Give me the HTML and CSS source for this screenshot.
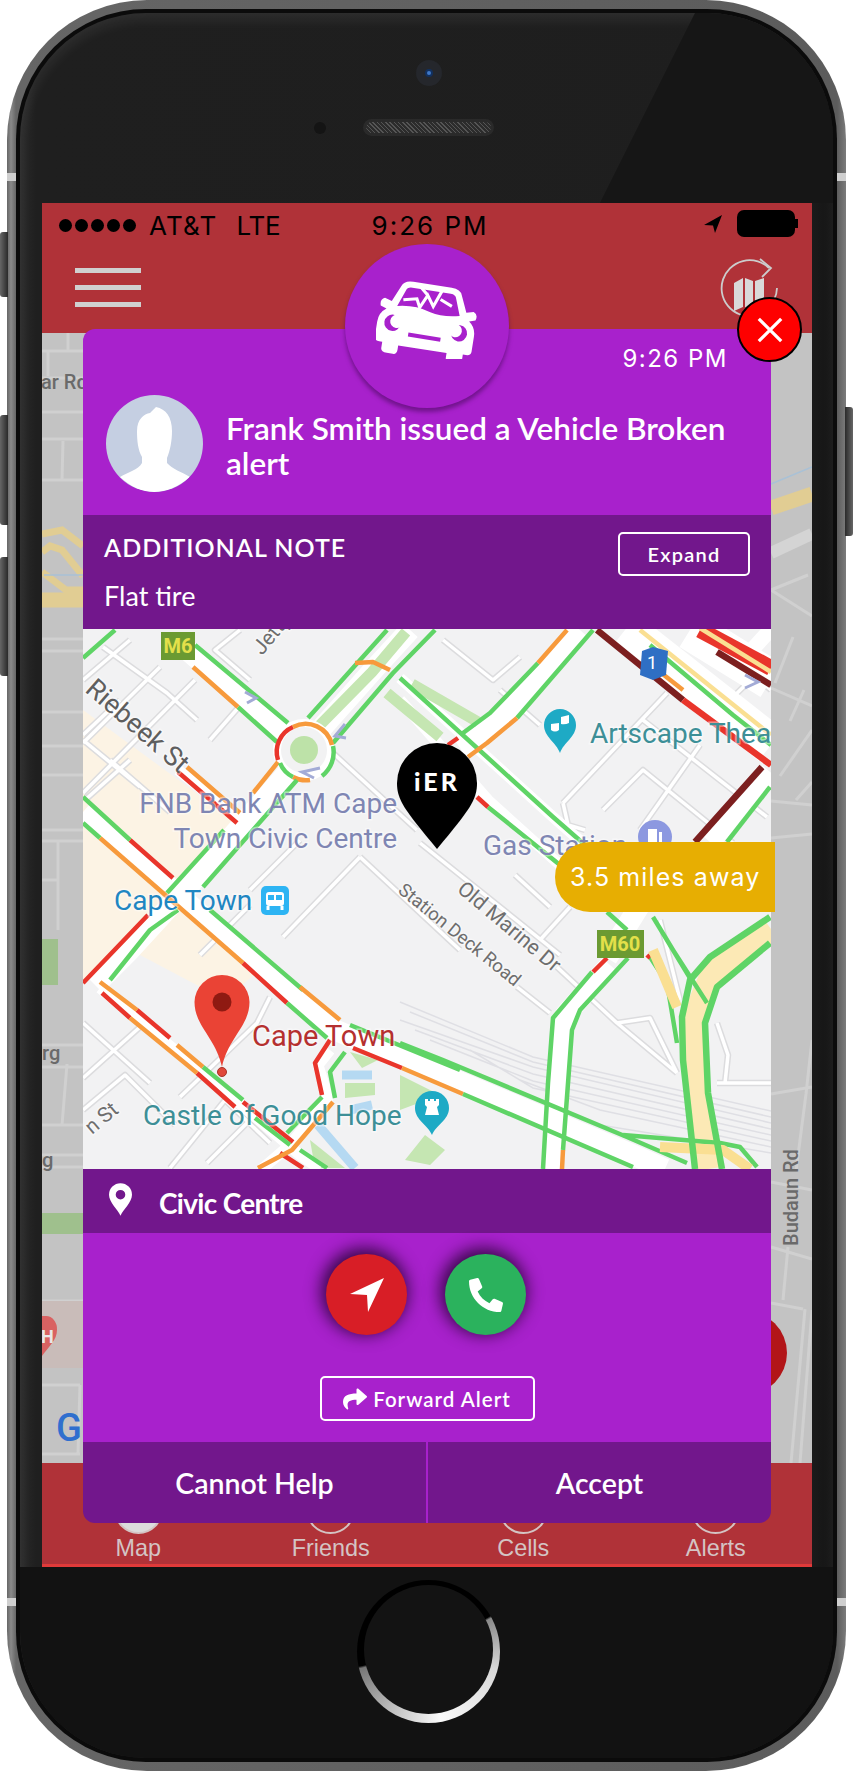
FILE: index.html
```html
<!DOCTYPE html>
<html>
<head>
  <title>iER Alert</title>
  <link rel="stylesheet" href="styles.css">
</head>
<body>
  <div class="device">
    <div class="side-btn left mute"></div>
    <div class="side-btn left vol-up"></div>
    <div class="side-btn left vol-down"></div>
    <div class="side-btn right power"></div>
    <div class="band left top"></div>
    <div class="band right top"></div>
    <div class="band left bottom"></div>
    <div class="band right bottom"></div>

    <div class="rim">
      <div class="edge">
        <div class="face">
          <div class="face-top">
            <div class="camera"><div class="lens"></div></div>
            <div class="speaker-row">
              <div class="sensor"></div>
              <div class="speaker"></div>
            </div>
          </div>

          <div class="screen">
            <div class="status">
              <div class="dots"><i></i><i></i><i></i><i></i><i></i></div>
              <span class="carrier">AT&amp;T</span>
              <span class="network">LTE</span>
              <span class="status-time">9:26 PM</span>
              <svg class="status-arrow" viewBox="0 0 18 18"><path d="M18 0L0 10l9 .5L11 18z"/></svg>
              <div class="battery"></div>
            </div>

            <div class="nav">
              <div class="burger"><i></i><i></i><i></i></div>
              <svg class="map-refresh" viewBox="0 0 60 60">
                <path class="refresh-line" d="M50 10A28 28 0 1 0 34 58M58 30a28 28 0 0 1-3 12"/>
                <path class="refresh-line" d="M41 1l11 9-9 9"/>
                <path class="refresh-fold" d="M15 25l9-5v29l-9 4zM26 20l8 3v29l-8-3zM36 23l9-3v29l-9 3z"/>
              </svg>
            </div>

            <svg class="back-map" viewBox="42 333 770 1130">
              <rect x="42" y="333" width="770" height="1130" fill="#c3c3c3"/>
              <g class="back-roads">
                <path d="M68 333V351M42 351H83M48 351V376M42 378H83M42 412H83M42 439H83M63 441L62 480M42 480H83M42 639H83M42 651H83M42 712H83M42 746H83M42 775H83M42 830H83M42 841H83M58 841V930M42 880H58"/>
                <path d="M42 1045H83M42 1067H83M67 1064L62 1125M42 1125H83M42 1155H83M42 1167H83M42 1301H83M42 1385H80M80 1385L78 1454M42 1454H80M60 1310L56 1368"/>
                <path d="M771 590L812 616M771 590L808 575M793 637L775 683M771 688L812 706M804 690L790 721M780 776L812 730M796 800L812 782M771 801L812 805M771 838L812 834"/>
                <path d="M771 1094L812 1087M806 1094L796 1171M812 1040L806 1094M771 1182L812 1190M771 1247L812 1259M783 1300L788 1247M771 1303L803 1309M805 1309L791 1463M812 1310L800 1463"/>
              </g>
              <path class="back-wide" d="M771 553L812 534"/>
              <path class="back-water" d="M771 484L812 467"/>
              <path class="back-yellow" d="M771 508L812 494"/>
              <path class="back-yellow thin" d="M42 534L62 530L83 546M42 552L50 546L62 550L83 576M42 572L66 590H83"/>
              <path class="back-yellow" d="M42 600H83"/>
              <path class="back-water" d="M44 575H83"/>
              <rect class="back-green" x="42" y="939" width="16" height="46"/>
              <rect class="back-green" x="42" y="1213" width="41" height="21"/>
              <rect class="back-pink" x="42" y="1301" width="41" height="67"/>
              <path class="back-pin" d="M42 1316h4a11 13 0 0 1 11 14c0 10-8 16-15 26z"/>
              <text class="back-pin-h" x="41" y="1343">H</text>
              <text class="back-label" x="41" y="389">ar Rd</text>
              <text class="back-label" x="42" y="1060">rg</text>
              <text class="back-label" x="42" y="1167">g</text>
              <text class="back-logo" x="56" y="1441">G</text>
              <circle cx="745" cy="1353" r="42" fill="#b21518"/>
              <text class="back-label" transform="translate(798 1246) rotate(-90)">Budaun Rd</text>
            </svg>

            <div class="tabs">
              <div class="tab"><div class="tab-icon filled"></div><span>Map</span></div>
              <div class="tab"><div class="tab-icon"></div><span>Friends</span></div>
              <div class="tab"><div class="tab-icon"></div><span>Cells</span></div>
              <div class="tab"><div class="tab-icon"></div><span>Alerts</span></div>
            </div>

            <!-- alert popup over the map screen -->
            <div class="alert">
              <div class="alert-badge">
                <svg class="car" viewBox="0 0 100 76">
                  <g transform="rotate(9 50 38)">
                    <path fill="#fff" d="M20 9Q22 3 31 3H69Q78 3 80 9L87 25L94 23Q99 25 97 31L91 33Q98 38 98 47V62Q98 66 93 66H90V72Q90 76 84 76H78Q74 76 74 71V67H26V71Q26 76 22 76H16Q10 76 10 72V66H7Q2 66 2 62V47Q2 38 9 33L3 31Q1 25 6 23L13 25Z"/>
                    <path fill="#a821cc" d="M25 13Q26 9 31 9H69Q74 9 75 13L81 29Q64 33 52 30Q36 25 19 29Z"/>
                    <path fill="none" stroke="#fff" stroke-width="3" d="M24 22L37 19L41 27L47 14L54 24L60 8M47 14L39 7M60 16L72 21"/>
                    <circle cx="17" cy="46" r="8" fill="#a821cc"/>
                    <circle cx="21" cy="44" r="6.500" fill="#fff"/>
                    <circle cx="83" cy="46" r="8" fill="#a821cc"/>
                    <circle cx="79" cy="44" r="6.500" fill="#fff"/>
                    <path stroke="#a821cc" stroke-width="4" d="M34 55H66"/>
                  </g>
                </svg>
              </div>
              <div class="alert-close">
                <svg viewBox="0 0 30 30"><path d="M3 3L27 27M27 3L3 27"/></svg>
              </div>

              <div class="alert-head">
                <div class="alert-time">9:26 PM</div>
                <div class="alert-who">
                  <div class="avatar">
                    <svg viewBox="0 0 97 97">
                      <path fill="#fff" d="M50 12C60 14 66 22 66 36C66 46 64 56 61 63V68C66 74 76 77 84 82C72 92 60 97 48 97C36 97 25 92 14 82C22 77 32 75 36 68V62C32 55 31 46 31 36C31 24 38 19 44 18Z"/>
                    </svg>
                  </div>
                  <div class="alert-title">Frank Smith issued a Vehicle Broken alert</div>
                </div>
              </div>

              <div class="note">
                <div class="note-text">
                  <div class="note-label">ADDITIONAL NOTE</div>
                  <div class="note-body">Flat tire</div>
                </div>
                <button class="btn-outline expand">Expand</button>
              </div>

              <svg class="alert-map" viewBox="83 629 688 540">
                <defs>
                  <path id="minor-roads" d="M83 743L160 667M83 793L195 680M103 647L167 693L197 720M83 740L140 787M120 700L83 735M83 680L130 640M110 760L170 812M85 800L130 760M240 630L215 650L250 680M333 753L417 830M360 857L283 937M360 857L460 950M443 640L493 680L520 657M563 803L667 693M603 810L643 770L733 843M643 720L767 817M500 690L540 725M563 803L568 825L585 830M420 843L560 955M557 967L617 1023L677 1073M617 1023L650 1018L677 1073M515 875L550 907M540 940L570 907M517 987L550 1013M717 1083H771M717 1023L728 1055L725 1083M83 1023L150 1083M83 1078L140 1027M83 1110L125 1075L175 1125M170 1168L225 1100L270 1143M180 1097L257 1023L270 997M207 1163L247 1123M640 830L700 745M700 630L771 690M730 700L771 660M210 740L245 700M200 955L250 905M300 840L250 890M660 920L680 1000"/>
                </defs>
                <rect x="83" y="629" width="688" height="540" fill="#f2f2f3"/>
                <path class="beige" d="M83 710L240 825L170 890L265 965L225 1000L140 955L83 980Z"/>

                <use href="#minor-roads" class="minor-out"/>
                <use href="#minor-roads" class="minor-in"/>
                <g class="rail">
                  <path d="M400 1002L533 1057L771 1111M410 1012L533 1062L771 1117M400 1020L533 1067L771 1123M415 1030L533 1074L771 1129M430 1040L533 1081L771 1135M470 1050L533 1088L771 1141M520 1080L600 1110L771 1147M600 1125L771 1153"/>
                </g>
                <g class="water">
                  <path d="M342 1075H372M350 1110L372 1105M318 1125L355 1168"/>
                </g>
                <path class="park" d="M345 1083L375 1083L375 1095L345 1098ZM310 1140L345 1168H315ZM400 1075L440 1095L400 1110ZM425 1135L445 1150L430 1165L405 1160ZM350 1052L378 1060L362 1068Z"/>

                <g class="road">
                  <path d="M185 648L282 732M320 730L375 668L410 630M290 770L185 890L130 950L95 985M83 812L270 975L335 1030L460 1082L640 1158L665 1169M580 630L528 690L490 728L460 748"/>
                  <path class="narrow" d="M100 988L240 1104L300 1155L320 1169M178 770L238 818M400 678L553 817L585 845M400 700L488 800L560 865M330 1050L318 1065L328 1098L290 1145L262 1169"/>
                  <path d="M770 772L710 842M610 965L566 1014L560 1060L553 1169M640 905L607 958"/>
                </g>
                <path class="median" d="M318 727L372 672L406 632"/>
                <path class="median" d="M412 684L478 722M387 693L440 737"/>
                <path class="freeway" d="M625 630L771 745"/>
                <path class="freeway" d="M760 630L771 640M690 630L771 680"/>
                <path class="yellow-fill" d="M771 929L713 972L693 1020L695 1080L708 1169"/>
                <path class="road-ring" d="M331 750A27 27 0 1 1 277 750A27 27 0 1 1 331 750"/>
                <circle cx="304" cy="750" r="14" fill="#bde2a8"/>

                <g class="traffic">
                  <path class="g" d="M83 658L115 630M195 645L288 723M238 707L277 742M308 718L387 630M333 743L393 673L435 630"/>
                  <path class="o" d="M193 667L238 707M355 663L373 662L390 670"/>
                  <path class="r" d="M278 760A27 27 0 0 1 293 727"/>
                  <path class="o" d="M293 727A27 27 0 0 1 332 745M293 777A27 27 0 0 0 310 780M278 762L253 793"/>
                  <path class="g" d="M333 746A30 30 0 0 1 322 776M280 763A27 27 0 0 0 293 777M224 830L167 893M297 780L203 887M178 910L150 930L110 980"/>
                  <path class="r" d="M148 915L83 983M178 772L237 823M130 840L173 878"/>
                  <path class="o" d="M187 767L240 813M100 838L243 963"/>
                  <path class="g" d="M83 797L130 840M83 823L100 838M210 910L303 990M350 1025L460 1070"/>
                  <path class="r" d="M243 963L287 1003M353 1048L402 1068M102 993L130 1018M137 1010L170 1038M197 1073L235 1107M243 1102L293 1142M280 1153L303 1168M330 1040L315 1063L322 1095"/>
                  <path class="o" d="M300 987L340 1020M402 1068L463 1094M100 982L137 1010M177 1045L203 1067M130 1018L197 1073M333 1102L292 1150L258 1168"/>
                  <path class="g" d="M287 1003L327 1038M203 1067L243 1100M255 1118L290 1145M300 1150L327 1168M345 1052L330 1072L335 1098M322 1097L287 1133M400 1043L443 1060L627 1137L687 1163M463 1094L633 1167"/>
                  <path class="g" d="M400 678L553 817L585 845M607 912L627 930M488 807L560 865M593 630L517 718M538 663L490 713L463 733M653 917L693 983M592 972L553 1018L548 1083L543 1169M628 958L580 1010L572 1030L563 1150M623 1135L720 1143L740 1147L757 1167M650 957L667 983L677 1043M673 950L707 1003"/>
                  <path class="o" d="M517 718L487 743L468 757M567 630L538 663M563 1150L562 1169"/>
                  <path class="r" d="M477 797L488 807M448 745L458 738M593 972L607 958M647 958L650 955"/>
                  <path class="g" d="M770 787L727 842"/>
                  <path class="y wide" d="M653 950L677 1007M660 1147L723 1150L750 1169"/>
                  <path class="y" d="M640 630L771 735"/>
                  <path class="g" d="M650 645L733 715L771 745"/>
                  <path class="o" d="M655 668L683 690"/>
                  <path class="dk thick" d="M597 630L683 700M762 767L695 842"/>
                  <path class="r thick" d="M683 700L771 765"/>
                  <path class="r heavy" d="M700 630L771 668"/>
                  <path class="y" d="M700 628L771 672"/>
                  <path class="dk thick" d="M717 652L771 685"/>
                  <path class="g thick" d="M770 917L710 957L690 980L682 1017L683 1060L695 1169M770 943L717 987L705 1023L708 1093L722 1169"/>
                </g>

                <path class="chevrons" d="M245 692L256 698L247 703M345 724L335 736L346 738M320 768L302 772L314 778M745 675L758 682L745 688"/>

                <text class="lbl-poi" x="397" y="813" text-anchor="end">FNB Bank ATM Cape</text>
                <text class="lbl-poi" x="397" y="848" text-anchor="end">Town Civic Centre</text>
                <text class="lbl-poi" x="483" y="855">Gas Station</text>
                <text class="lbl-transit" x="114" y="910">Cape Town</text>
                <text class="lbl-city" x="252" y="1046">Cape Town</text>
                <text class="lbl-sight" x="143" y="1125">Castle of Good Hope</text>
                <text class="lbl-sight" x="590" y="743">Artscape Thea</text>
                <text class="lbl-road big" transform="translate(84 691) rotate(41)">Riebeek St</text>
                <text class="lbl-road" transform="translate(456 891) rotate(40)">Old Marine Dr</text>
                <text class="lbl-road small" transform="translate(397 892) rotate(39)">Station Deck Road</text>
                <text class="lbl-road" transform="translate(262 656) rotate(-50)">Jetty</text>
                <text class="lbl-road" transform="translate(92 1135) rotate(-40)">n St</text>

                <g>
                  <rect class="lbl-bus" x="261" y="886" width="28" height="29" rx="5"/>
                  <rect x="266" y="892" width="18" height="14" rx="3" fill="#fff"/>
                  <path d="M268 895h6v5h-6zM276 895h6v5h-6z" fill="#2db4f3"/>
                  <path d="M268 906v4M282 906v4" stroke="#fff" stroke-width="3"/>
                </g>

                <g>
                  <rect class="shield-green" x="161" y="632" width="34" height="28"/>
                  <text class="shield-text" x="178" y="653" text-anchor="middle">M6</text>
                  <rect class="shield-green" x="597" y="930" width="47" height="28"/>
                  <text class="shield-text" x="620" y="951" text-anchor="middle">M60</text>
                  <path d="M642 651L653 647L668 651L666 675L653 680L640 675Z" fill="#2f6fc4"/>
                  <text class="shield-num" x="652" y="669" text-anchor="middle">1</text>
                </g>

                <g fill="#1eaac5">
                  <path d="M560 709A16.500 16.500 0 0 1 576 725C576 737 564 742 560 753C556 742 544 737 544 725A16.500 16.500 0 0 1 560 709Z"/>
                  <path d="M432 1091A17 17 0 0 1 449 1108C449 1120 436 1125 432 1135C428 1125 415 1120 415 1108A17 17 0 0 1 432 1091Z"/>
                </g>
                <path fill="#fff" d="M551 724l8-1v7q-4 3-8 0zM561 717l8-2v8q-4 2-8 1z"/>
                <path fill="#fff" d="M425 1099h3v2h2v-2h4v2h2v-2h3v6l-2 2 2 8h-14l2-8-2-2z"/>
                <circle cx="655" cy="837" r="17" fill="#8c98e0"/>
                <path fill="#fff" d="M648 829h9v17h-9zM659 832h3v12h-3z"/>

                <path fill="#ea4335" d="M222 975A27.500 27.500 0 0 1 249.500 1002C249.500 1026 228 1038 222 1067C216 1038 194.500 1026 194.500 1002A27.500 27.500 0 0 1 222 975Z"/>
                <circle cx="222" cy="1002" r="9.500" fill="#8f1a12"/>
                <circle cx="222" cy="1072" r="4.500" fill="#e0483a" stroke="#a83226"/>

                <path d="M437 743A40 40 0 0 1 477 783C477 800 470 809 437 849C404 809 397 800 397 783A40 40 0 0 1 437 743Z"/>
                <text class="pin-text" x="437" y="791" text-anchor="middle">iER</text>
              </svg>

              <div class="distance">3.5 miles away</div>

              <div class="place">
                <svg class="place-pin" viewBox="0 0 24 34">
                  <path fill-rule="evenodd" fill="#fff" d="M12 0A12 12 0 0 1 24 12C24 20 15 27 12 34C9 27 0 20 0 12A12 12 0 0 1 12 0ZM12 7A5 5 0 1 0 12 17A5 5 0 1 0 12 7Z"/>
                </svg>
                <span>Civic Centre</span>
              </div>

              <div class="actions">
                <div class="round-row">
                  <div class="round red">
                    <svg viewBox="0 0 34 34"><path d="M34 0L0 16L17 17L18 34Z"/></svg>
                  </div>
                  <div class="round green">
                    <svg class="phone-icon" viewBox="0 0 512 512"><path transform="matrix(-1 0 0 1 512 0)" d="M493.400 24.600l-104-24c-11.300-2.600-22.900 3.300-27.500 13.900l-48 112c-4.200 9.800-1.400 21.300 6.900 28l60.600 49.600c-36 76.700-98.900 140.500-177.200 177.200l-49.600-60.600c-6.800-8.300-18.200-11.100-28-6.900l-112 48C3.900 366.500-2 378.100.6 389.400l24 104C27.100 504.200 36.700 512 48 512c256.100 0 464-207.500 464-464 0-11.200-7.700-20.900-18.600-23.400z"/></svg>
                  </div>
                </div>
                <button class="btn-outline forward">
                  <svg viewBox="0 0 512 512"><path d="M503.700 189.800L327.700 37.900C312.300 24.500 288 35.300 288 56v80.100C127.400 137.900 0 170.100 0 322.300c0 61.400 39.600 122.300 83.300 154.100 13.700 9.900 33.100-2.500 28.100-18.600C66.100 312.800 132.900 274.300 288 272.100V360c0 20.700 24.300 31.500 39.700 18.200l176-152c11.100-9.600 11.100-26.800 0-36.400z"/></svg>
                  Forward Alert
                </button>
              </div>

              <div class="alert-foot">
                <div class="foot-btn">Cannot Help</div>
                <div class="foot-btn">Accept</div>
              </div>
            </div>
          </div>

          <div class="face-bottom">
            <div class="home"><div class="home-inner"></div></div>
          </div>
        </div>
      </div>
    </div>
  </div>
</body>
</html>
```

FILE: styles.css
```css
* {
  box-sizing: border-box;
}

body {
  margin: 0;
  background: #fff;
  font-family: "Lato", sans-serif;
}

.device {
  position: relative;
  width: 853px;
  height: 1771px;
  padding: 0 7px;
}

/* hardware bits on the outside */
.side-btn {
  position: absolute;
  width: 8px;
  background: linear-gradient(90deg, #666, #2a2a2a);
  border-radius: 3px 0 0 3px;
}

.side-btn.right {
  right: 0;
  transform: scaleX(-1);
}

.side-btn.left {
  left: 0;
}

.mute { top: 232px; height: 65px; }
.vol-up { top: 415px; height: 110px; }
.vol-down { top: 557px; height: 119px; }
.power { top: 407px; height: 129px; }

.band {
  position: absolute;
  z-index: 2;
  width: 9px;
  height: 8px;
  background: #cfcfcf;
}

.band.left { left: 7px; }
.band.right { right: 7px; }
.band.top { top: 173px; }
.band.bottom { top: 1598px; }

.rim {
  height: 1771px;
  padding: 9px;
  border-radius: 140px;
  background: linear-gradient(90deg, #666, #8a8a8a 4px, #666 9px, #5c5c5c 830px, #7c7c7c);
}

.edge {
  height: 100%;
  padding: 4px;
  border-radius: 130px;
  background: #0b0b0b;
}

.face {
  position: relative;
  height: 100%;
  padding: 0 21px 0 22px;
  border-radius: 126px;
  background: linear-gradient(90deg, #2a2a2a 0, #1f1f1f 16px, #1e1e1e 780px, #141414 813px);
  box-shadow: inset 0 6px 14px rgba(255, 255, 255, 0.08);
  overflow: hidden;
}

/* the glass reflection: darker to the right of the diagonal */
.face::before {
  content: "";
  position: absolute;
  top: 0;
  left: 0;
  width: 813px;
  height: 190px;
  background: #161616;
  clip-path: polygon(675px 0, 813px 0, 813px 190px, 580px 190px);
}

.face-top {
  position: relative;
  height: 190px;
  padding-top: 47px;
}

.camera {
  width: 26px;
  height: 26px;
  margin: 0 auto;
  padding: 9px;
  border-radius: 50%;
  background: #25272c;
  transform: translateX(2px);
}

.lens {
  width: 8px;
  height: 8px;
  border-radius: 50%;
  background: #3f78c8;
  border: 2px solid #12305e;
}

.speaker-row {
  display: flex;
  align-items: center;
  margin-top: 33px;
  padding-left: 272px;
}

.sensor {
  width: 12px;
  height: 12px;
  border-radius: 50%;
  background: #141414;
}

.speaker {
  width: 131px;
  height: 17px;
  margin-left: 37px;
  border-radius: 9px;
  border: 3px solid #2a2a2a;
  background: repeating-linear-gradient(45deg, #555 0, #555 1px, #2c2c2c 1px, #2c2c2c 3px);
}

.face-bottom {
  height: 191px;
  margin: 0 -21px 0 -22px;
  padding-top: 13px;
  background: #121212;
}

.home {
  width: 143px;
  height: 143px;
  margin: 0 auto;
  padding: 7px;
  border-radius: 50%;
  transform: translateX(2px);
  background: conic-gradient(#000 0 60deg, #8a8a8a 62deg, #d8d8d8 105deg, #fafafa 170deg, #bbb 215deg, #777 256deg, #000 258deg 360deg);
}

.home-inner {
  height: 100%;
  margin-top: -2px;
  border-radius: 50%;
  background: #131313;
}

/* app screen */
.screen {
  position: relative;
  width: 770px;
  background: #b03238;
}

.status {
  display: flex;
  align-items: center;
  height: 44px;
  padding-left: 17px;
  font-family: "Inter", sans-serif;
  font-size: 26px;
  color: #000;
}

.dots {
  display: flex;
  gap: 3px;
  width: 80px;
}

.dots i {
  width: 13px;
  height: 13px;
  border-radius: 50%;
  background: #000;
}

.carrier {
  margin-left: 10px;
  letter-spacing: 1.200px;
}

.network {
  margin-left: 19px;
  letter-spacing: -0.2px;
}

.status-time {
  margin-left: 91px;
  letter-spacing: 2px;
}

.status-arrow {
  width: 18px;
  height: 18px;
  margin-left: auto;
  margin-top: -2px;
}

.battery {
  position: relative;
  width: 58px;
  height: 27px;
  margin: -4px 17px 0 15px;
  border-radius: 7px;
  background: #000;
}

.battery::after {
  content: "";
  position: absolute;
  right: -3px;
  top: 9px;
  width: 3px;
  height: 9px;
  background: #000;
}

.nav {
  display: flex;
  justify-content: space-between;
  height: 86px;
  padding: 11px 33px 0 33px;
}

.burger {
  display: flex;
  flex-direction: column;
  gap: 12px;
  width: 66px;
  padding-top: 10px;
}

.burger i {
  height: 5px;
  background: #d0d0d0;
}

.map-refresh {
  width: 60px;
  height: 60px;
}

.refresh-line {
  fill: none;
  stroke: #ccc;
  stroke-width: 1.8;
}

.refresh-fold {
  fill: #d9d9d9;
}

.back-map,
.alert-map {
  display: block;
}

.back-map {
  width: 770px;
  height: 1130px;
}

.back-roads path {
  fill: none;
  stroke: #d0d0d0;
  stroke-width: 3;
}

.back-wide {
  stroke: #d4d4d4;
  stroke-width: 12;
  fill: none;
}

.back-water {
  stroke: #a9c1d6;
  stroke-width: 1.5;
  fill: none;
}

.back-yellow {
  stroke: #e1cd93;
  stroke-width: 15;
  fill: none;
}

.back-yellow.thin {
  stroke-width: 7;
}

.back-green { fill: #9fc08d; }
.back-pink { fill: #c9bcb9; }
.back-pin { fill: #d96262; }

.back-pin-h {
  font: bold 18px "Roboto", sans-serif;
  fill: #e8e8e8;
}

.back-label {
  font: 500 20px "Roboto", sans-serif;
  fill: #6a6a6a;
}

.back-logo {
  font: 500 38px "Roboto", sans-serif;
  fill: #2f6fce;
}

.tabs {
  display: flex;
  height: 104px;
  padding-top: 22px;
  border-bottom: 3px solid #e03a3a;
}

.tab {
  flex: 1;
  display: flex;
  flex-direction: column;
  align-items: center;
  font-family: "Liberation Sans", sans-serif;
  font-size: 23.400px;
  line-height: 26px;
  color: #d4c4c4;
}

.tab-icon {
  width: 49px;
  height: 49px;
  margin-bottom: 1px;
  border-radius: 50%;
  border: 2px solid #d4c4c4;
}

.tab-icon.filled {
  background: #dcdcdc;
}

/* the popup */
.alert {
  position: absolute;
  top: 126px;
  left: 41px;
  width: 688px;
  color: #fff;
}

.alert-badge {
  position: absolute;
  z-index: 3;
  top: -85px;
  left: 262px;
  display: flex;
  justify-content: center;
  width: 164px;
  height: 164px;
  padding-top: 37px;
  border-radius: 50%;
  background: #a821cc;
  box-shadow: 0 4px 4px rgba(70, 10, 90, 0.55);
}

.car {
  width: 102px;
  height: 78px;
}

.alert-close {
  position: absolute;
  z-index: 4;
  top: -32px;
  left: 654px;
  width: 65px;
  height: 65px;
  padding: 17px;
  border-radius: 50%;
  border: 2px solid #000;
  background: #fe0000;
}

.alert-close svg {
  display: block;
  width: 28px;
  height: 28px;
  stroke: #fff;
  stroke-width: 3.500;
}

.alert-head {
  height: 186px;
  padding: 15px 43px 0 23px;
  border-radius: 12px 12px 0 0;
  background: #a821cc;
}

.alert-time {
  font-family: "Inter", sans-serif;
  font-size: 24px;
  line-height: 29px;
  letter-spacing: 1.5px;
  text-align: right;
}

.alert-who {
  display: flex;
  align-items: center;
  gap: 23px;
  margin-top: 22px;
  margin-right: -20px;
}

.avatar {
  flex: none;
  width: 97px;
  height: 97px;
  border-radius: 50%;
  background: #c5cfe2;
  overflow: hidden;
}

.avatar svg {
  display: block;
}

.alert-title {
  padding-top: 4px;
  font-size: 31.500px;
  font-weight: 600;
  line-height: 35px;
}

.note {
  display: flex;
  justify-content: space-between;
  height: 114px;
  padding: 17px 21px 0 21px;
  background: #72178c;
}

.note-label {
  font-size: 25px;
  font-weight: 600;
  line-height: 30px;
  letter-spacing: 1px;
}

.note-body {
  margin-top: 19px;
  font-size: 27px;
  line-height: 30px;
}

.btn-outline {
  display: flex;
  align-items: center;
  justify-content: center;
  border: 2px solid #fff;
  border-radius: 5px;
  background: none;
  color: #fff;
  font-family: "Lato", sans-serif;
  font-weight: 600;
}

.expand {
  width: 132px;
  height: 44px;
  font-size: 20px;
  letter-spacing: 1.200px;
}

.alert-map {
  width: 688px;
  height: 540px;
}

.beige { fill: #fcf3e4; }
.park { fill: #c5e6b2; }

.water path {
  fill: none;
  stroke: #b5d9f2;
  stroke-width: 9;
}

.minor-out {
  fill: none;
  stroke: #dcdcde;
  stroke-width: 6.500;
  stroke-linejoin: round;
}

.minor-in {
  fill: none;
  stroke: #fff;
  stroke-width: 3.500;
  stroke-linejoin: round;
}

.rail path {
  fill: none;
  stroke: #dfdfe4;
  stroke-width: 1.500;
}

.road path {
  fill: none;
  stroke: #fff;
  stroke-width: 21;
  stroke-linejoin: round;
}

.road path.narrow {
  stroke-width: 11;
}

.median {
  fill: none;
  stroke: #c5e6b2;
  stroke-width: 11;
}

.freeway {
  fill: none;
  stroke: #fff;
  stroke-width: 40;
}

.yellow-fill {
  fill: none;
  stroke: #fce9b5;
  stroke-width: 24;
  stroke-linejoin: round;
}

.road-ring {
  fill: none;
  stroke: #fff;
  stroke-width: 8;
}

.traffic path {
  fill: none;
  stroke-width: 4.500;
  stroke-linejoin: round;
}

.traffic .g { stroke: #5fd466; }
.traffic .o { stroke: #f79a3c; }
.traffic .r { stroke: #e9352b; }
.traffic .dk { stroke: #7c1f1f; }
.traffic .y { stroke: #fadf92; }
.traffic .thick { stroke-width: 6.500; }
.traffic .heavy { stroke-width: 16; }
.traffic .wide { stroke-width: 10; }

.chevrons {
  fill: none;
  stroke: #a3abd6;
  stroke-width: 3;
}

.alert-map text {
  font-family: "Roboto", sans-serif;
  paint-order: stroke;
  stroke: rgba(255, 255, 255, 0.45);
  stroke-width: 3px;
}

.alert-map .lbl-poi { font-size: 28px; fill: #7f86b3; }
.alert-map .lbl-transit { font-size: 28px; fill: #1f86c2; }
.alert-map .lbl-city { font-size: 29px; fill: #b5302f; }
.alert-map .lbl-sight { font-size: 28px; fill: #3d8f97; }
.alert-map .lbl-road { font-size: 21px; fill: #6e6e6e; }
.alert-map .lbl-road.small { font-size: 18.500px; }
.alert-map .lbl-road.big { font-size: 27px; fill: #5e5e5e; }
.lbl-bus { fill: #2db4f3; }
.shield-green { fill: #6b9a32; }

.alert-map .shield-text {
  font-size: 20px;
  font-weight: 700;
  fill: #e3e04a;
  stroke: none;
}

.alert-map .shield-num {
  font-size: 18px;
  fill: #fff;
  stroke: none;
}

.alert-map .pin-text {
  font-family: "Lato", sans-serif;
  font-size: 25px;
  font-weight: 900;
  letter-spacing: 3px;
  fill: #fff;
  stroke: none;
}

.distance {
  position: absolute;
  top: 513px;
  right: -4px;
  display: flex;
  align-items: center;
  width: 220px;
  height: 70px;
  padding-left: 15px;
  border-radius: 35px 0 0 35px;
  background: #e7ae02;
  font-family: "Inter", sans-serif;
  font-size: 25px;
  letter-spacing: 1.100px;
}

.place {
  display: flex;
  align-items: center;
  gap: 27px;
  height: 64px;
  padding-left: 26px;
  background: #72178c;
  font-size: 28px;
  font-weight: 700;
  letter-spacing: -0.700px;
}

.place span {
  padding-top: 4px;
}

.place-pin {
  width: 23px;
  height: 33px;
  margin-top: -4px;
}

.actions {
  display: flex;
  flex-direction: column;
  align-items: center;
  height: 209px;
  padding-top: 21px;
  background: #a821cc;
}

.round-row {
  display: flex;
  gap: 38px;
  transform: translateX(-1px);
}

.round {
  display: flex;
  align-items: center;
  justify-content: center;
  width: 81px;
  height: 81px;
  border-radius: 50%;
  box-shadow: -2px -3px 16px 3px rgba(45, 5, 60, 0.9);
}

.round.red { background: #d81e26; }
.round.green { background: #2bb25d; }

.round svg {
  width: 34px;
  height: 34px;
  fill: #fff;
}

.round .phone-icon {
  width: 34px;
  height: 34px;
}

.forward {
  gap: 6px;
  width: 215px;
  height: 45px;
  margin-top: 41px;
  font-size: 20.500px;
  letter-spacing: 1px;
}

.forward svg {
  width: 24px;
  height: 24px;
  fill: #fff;
}

.alert-foot {
  display: flex;
  height: 81px;
  border-radius: 0 0 12px 12px;
  background: #72178c;
}

.foot-btn {
  flex: 1;
  display: flex;
  align-items: center;
  justify-content: center;
  font-size: 28.500px;
  font-weight: 600;
}

.foot-btn + .foot-btn {
  border-left: 2px solid #a821cc;
}
```
